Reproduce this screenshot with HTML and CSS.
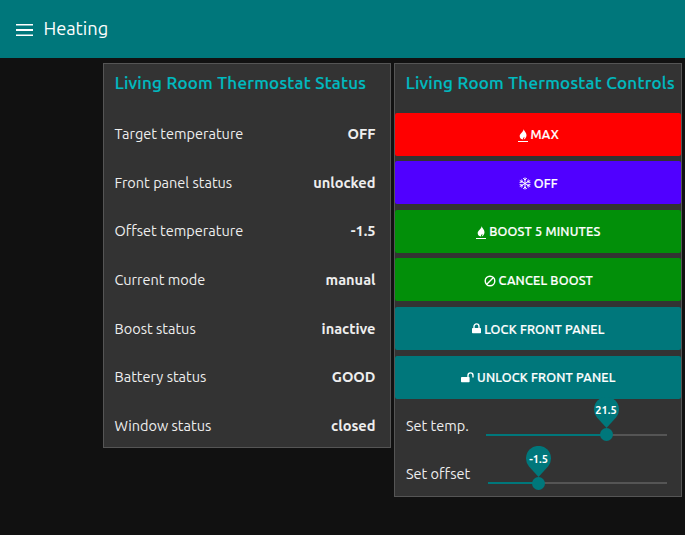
FILE: index.html
```html
<!DOCTYPE html>
<html lang="en">
<head>
<meta charset="utf-8">
<title>Heating</title>
<link rel="stylesheet" href="styles.css">
</head>
<body>
<header class="toolbar">
  <svg class="menu" viewBox="0 0 17 12"><path d="M0 0h17v1.500H0zM0 5h17v2H0zM0 10.500h17V12H0z"/></svg>
  <h1>Heating</h1>
</header>
<main class="dashboard">
  <section class="card">
    <h2>Living Room Thermostat Status</h2>
    <div class="rows">
      <div class="row"><span>Target temperature</span><b>OFF</b></div>
      <div class="row"><span>Front panel status</span><b>unlocked</b></div>
      <div class="row"><span>Offset temperature</span><b>-1.5</b></div>
      <div class="row"><span>Current mode</span><b>manual</b></div>
      <div class="row"><span>Boost status</span><b>inactive</b></div>
      <div class="row"><span>Battery status</span><b>GOOD</b></div>
      <div class="row"><span>Window status</span><b>closed</b></div>
    </div>
  </section>
  <section class="card">
    <h2>Living Room Thermostat Controls</h2>
    <div class="rows">
      <button class="red"><svg class="flame" viewBox="0 0 10 13"><path d="M6 0C5.600 2 8.600 3.300 8.500 6.300C8.400 8.500 7.200 10 5.700 10.500C6.300 9.500 6.600 8.600 6.400 7.800C5.800 8.400 4.900 9 4.900 10.500C2.600 10 1.500 8.600 1.700 6.700C2 4.500 5 3.200 6 0ZM0 12h10v1H0z"/></svg><span>MAX</span></button>
      <button class="violet"><svg class="snow" viewBox="0 0 12 13"><path d="M6 .5v12M.8 3.500l10.400 6M.8 9.500l10.400-6M4.200 1.200 6 3l1.800-1.800M4.200 11.800 6 10l1.800 1.800M.6 5.400 3.300 5 2.700 2.500M11.400 5.400 8.700 5l.6-2.500M.6 7.600l2.700.4-.6 2.500M11.400 7.600 8.700 8l.6 2.500"/></svg><span>OFF</span></button>
      <button class="green"><svg class="flame" viewBox="0 0 10 13"><path d="M6 0C5.600 2 8.600 3.300 8.500 6.300C8.400 8.500 7.200 10 5.700 10.500C6.300 9.500 6.600 8.600 6.400 7.800C5.800 8.400 4.900 9 4.900 10.500C2.600 10 1.500 8.600 1.700 6.700C2 4.500 5 3.200 6 0ZM0 12h10v1H0z"/></svg><span>BOOST 5 MINUTES</span></button>
      <button class="green"><svg class="ban" viewBox="0 0 12 12"><circle cx="6" cy="6" r="4.800"/><path d="m2.800 9.200 6.400-6.400"/></svg><span>CANCEL BOOST</span></button>
      <button class="teal"><svg class="lock" viewBox="0 0 9 11"><path class="solid" d="M.7 5h7.600q.7 0 .7.700v3.900q0 .7-.7.700H.7Q0 10.300 0 9.600V5.700Q0 5 .7 5"/><path d="M2 5V3.400a2.500 2.500 0 0 1 5 0V5"/></svg><span>LOCK FRONT PANEL</span></button>
      <button class="teal"><svg class="unlock" viewBox="0 0 13 11"><path class="solid" d="M.7 5h7.200q.7 0 .7.700v3.900q0 .7-.7.700H.7Q0 10.300 0 9.600V5.700Q0 5 .7 5"/><path d="M7 5V3.400a2.500 2.500 0 0 1 5 0V5.400"/></svg><span>UNLOCK FRONT PANEL</span></button>
      <div class="row slider-row"><span>Set temp.</span>
        <div class="slider temp"><i class="fill"></i><i class="knob"></i><div class="pin"><svg viewBox="0 0 25 31"><path d="M12.500 31 3 20.500A12.500 12.500 0 1 1 22 20.500Z"/></svg><b>21.5</b></div></div>
      </div>
      <div class="row slider-row"><span>Set offset</span>
        <div class="slider offset"><i class="fill"></i><i class="knob"></i><div class="pin"><svg viewBox="0 0 25 31"><path d="M12.500 31 3 20.500A12.500 12.500 0 1 1 22 20.500Z"/></svg><b>-1.5</b></div></div>
      </div>
    </div>
  </section>
</main>
</body>
</html>
```
FILE: styles.css
```css
* { box-sizing: border-box; }
body {
  margin: 0;
  height: 535px;
  overflow: hidden;
  background: #111;
  color: #eee;
  font: 14.500px/20px "Ubuntu", "Noto Sans", sans-serif;
}
.toolbar {
  height: 58px;
  display: flex;
  align-items: center;
  gap: 10px;
  padding: 0 16.400px;
  background: #00777b;
}
.menu { width: 17px; height: 12px; fill: #fff; margin-top: 2px; }
h1 { margin: 0; font-size: 18.300px; font-weight: 400; color: #fff; line-height: 24px; margin-top: -2px; }
.dashboard { display: flex; align-items: flex-start; gap: 3px; padding: 5px 0 0 103px; }
.card { width: 288px; border: 1px solid #555; background: #333; }
h2 {
  margin: 0;
  height: 48.650px;
  padding: 8px 0 0 10.700px;
  font-size: 17px;
  line-height: 22px;
  font-weight: 500;
  -webkit-text-stroke: .2px;
  letter-spacing: .27px;
  color: #00bbc0;
  white-space: nowrap;
}
.rows { display: grid; grid-auto-rows: 43px; gap: 5.600px; }
.card:first-child .rows { margin-bottom: -.400px; }
.row { display: flex; align-items: center; justify-content: space-between; padding: 0 14.500px 0 10.500px; }
.row b { font-size: 14.600px; }
.slider-row { padding-left: 11px; }
button {
  display: flex;
  align-items: center;
  justify-content: center;
  gap: 3px;
  border: 0;
  border-radius: 2px;
  padding: 0 0 0 .6px;
  color: #fff;
  font: 500 12.600px/20px "Ubuntu", "Noto Sans", sans-serif;
  letter-spacing: .18px;
  -webkit-text-stroke: .2px;
}
.red { background: #f00; }
.violet { background: #5000ff; }
.green { background: #028f09; }
.teal { background: #00777b; }
button svg { fill: none; stroke: #fff; stroke-width: 1.400; }
button .flame { width: 10px; height: 13px; stroke: none; fill: #fff; margin-top: 2px; }
button .snow { width: 12px; height: 13px; stroke-width: 1; margin-top: 1px; }
.ban { width: 12px; height: 12px; margin-top: 2px; }
.lock { width: 9px; height: 11px; }
.unlock { width: 13px; height: 11px; margin-top: 1px; }
button .solid { fill: #fff; stroke: none; }
.slider { position: relative; height: 2px; background: #555; margin-top: 18px; }
.temp { width: 181px; --at: 120.500px; }
.offset { width: 179px; --at: 51px; }
.fill { position: absolute; left: 0; top: 0; height: 2px; width: var(--at); background: #00777b; }
.knob { position: absolute; left: var(--at); top: -5.500px; width: 13px; height: 13px; margin-left: -6.500px; border-radius: 50%; background: #00777b; }
.pin { position: absolute; left: var(--at); top: -36.500px; width: 25px; height: 31px; margin-left: -12.500px; }
.pin svg { position: absolute; inset: 0; width: 25px; height: 31px; fill: #00777b; }
.pin b { position: absolute; inset: 0; text-align: center; font-size: 11px; line-height: 27px; color: #fff; }
```
